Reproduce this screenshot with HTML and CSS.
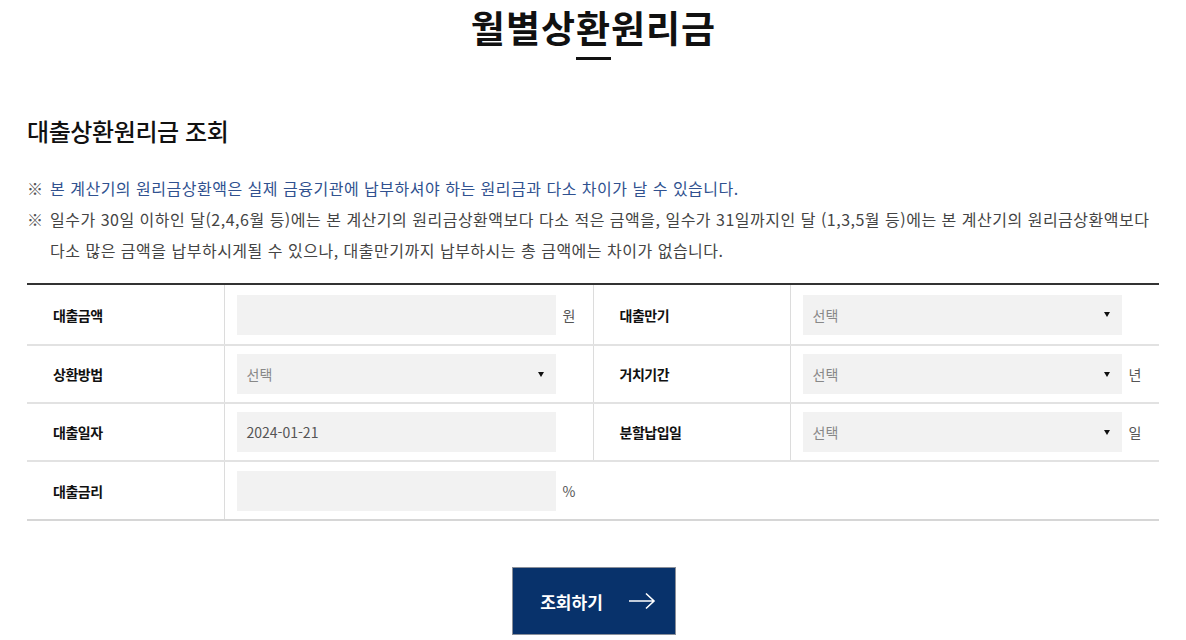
FILE: index.html
```html
<!DOCTYPE html>
<html lang="ko">
<head>
<meta charset="utf-8">
<title>월별상환원리금</title>
<link rel="stylesheet" href="styles.css">
</head>
<body>
<div class="page">
  <header class="page-head">
    <h1 class="page-title">월별상환원리금</h1>
    <span class="title-bar"></span>
  </header>

  <h2 class="section-title">대출상환원리금 조회</h2>

  <ul class="notes">
    <li class="note note-blue"><span class="mark">※</span><span>본 계산기의 원리금상환액은 실제 금융기관에 납부하셔야 하는 원리금과 다소 차이가 날 수 있습니다.</span></li>
    <li class="note"><span class="mark">※</span><span>일수가 30일 이하인 달(2,4,6월 등)에는 본 계산기의 원리금상환액보다 다소 적은 금액을, 일수가 31일까지인 달 (1,3,5월 등)에는 본 계산기의 원리금상환액보다 다소 많은 금액을 납부하시게될 수 있으나, 대출만기까지 납부하시는 총 금액에는 차이가 없습니다.</span></li>
  </ul>

  <table class="form-table">
    <colgroup>
      <col class="c-label"><col class="c-field"><col class="c-label"><col class="c-field">
    </colgroup>
    <tbody>
      <tr class="first-row">
        <th>대출금액</th>
        <td><div class="field"><div class="box"></div><span class="unit">원</span></div></td>
        <th>대출만기</th>
        <td><div class="field"><div class="box select"><span>선택</span><i class="caret"></i></div></div></td>
      </tr>
      <tr>
        <th>상환방법</th>
        <td><div class="field"><div class="box select"><span>선택</span><i class="caret"></i></div></div></td>
        <th>거치기간</th>
        <td><div class="field"><div class="box select"><span>선택</span><i class="caret"></i></div><span class="unit">년</span></div></td>
      </tr>
      <tr>
        <th>대출일자</th>
        <td><div class="field"><div class="box value"><span>2024-01-21</span></div></div></td>
        <th>분할납입일</th>
        <td><div class="field"><div class="box select"><span>선택</span><i class="caret"></i></div><span class="unit">일</span></div></td>
      </tr>
      <tr class="last-row">
        <th>대출금리</th>
        <td colspan="3"><div class="field"><div class="box"></div><span class="unit">%</span></div></td>
      </tr>
    </tbody>
  </table>

  <div class="actions">
    <button class="btn-search" type="button">
      <span>조회하기</span>
      <svg class="btn-arrow" width="28" height="18" viewBox="0 0 28 18" aria-hidden="true">
        <path d="M1 9 H26 M18 1.5 L26 9 L18 16.5" fill="none" stroke="#fff" stroke-width="1.6"/>
      </svg>
    </button>
  </div>
</div>
</body>
</html>
```

FILE: styles.css
```css
* { box-sizing: border-box; }

html, body {
  margin: 0;
  padding: 0;
  background: #fff;
}

body {
  font-family: "Noto Sans CJK KR", "Noto Sans", sans-serif;
  color: #222;
}

.page {
  width: 1132px;
  margin-left: 27px;
}

.page-head {
  display: flex;
  flex-direction: column;
  align-items: center;
  padding-left: 1px;
}

.page-title {
  margin: 0;
  font-size: 37px;
  font-weight: 700;
  line-height: 54px;
  color: #111;
  letter-spacing: 1px;
}

.title-bar {
  display: block;
  width: 35px;
  height: 3px;
  background: #111;
  margin-top: 3px;
}

.section-title {
  margin: 55px 0 0;
  font-size: 24px;
  font-weight: 500;
  line-height: 32px;
  letter-spacing: -0.4px;
  color: #111;
}

.notes {
  list-style: none;
  margin: 26px 0 0;
  padding: 0;
}

.note {
  display: flex;
  font-size: 16px;
  line-height: 31px;
  color: #444;
  letter-spacing: 0.5px;
}

.note-blue { color: #30518f; }

.note .mark {
  flex: 0 0 23px;
  color: #555;
  letter-spacing: 0;
}

.form-table {
  width: 1132px;
  margin-top: 17px;
  border-collapse: collapse;
  table-layout: fixed;
  border-top: 2px solid #333;
  border-bottom: 2px solid #d6d6d6;
}

.c-label { width: 197px; }
.c-field { width: 369px; }

.form-table th,
.form-table td {
  height: 58px;
  padding: 0;
  border-bottom: 2px solid #e2e2e2;
  border-left: 1px solid #dcdcdc;
  vertical-align: middle;
}

.form-table .first-row th,
.form-table .first-row td { height: 61px; }

.form-table .last-row th,
.form-table .last-row td { height: 59px; border-bottom: 0; }

.form-table th:first-child { border-left: 0; }

.form-table th {
  text-align: left;
  padding-left: 26px;
  font-size: 14px;
  font-weight: 700;
  color: #111;
  letter-spacing: -0.5px;
}

.field {
  display: flex;
  align-items: center;
  padding-left: 12px;
  gap: 7px;
}

.box {
  width: 319px;
  height: 40px;
  background: #f2f2f2;
  display: flex;
  align-items: center;
  padding: 0 10px;
  font-size: 14px;
  color: #888;
}

.box.value { color: #555; }

.box.select { justify-content: space-between; padding-right: 12px; }

.caret {
  width: 0;
  height: 0;
  border-left: 3px solid transparent;
  border-right: 3px solid transparent;
  border-top: 5px solid #111;
}

.unit {
  font-size: 14px;
  color: #555;
}

.actions {
  display: flex;
  justify-content: center;
  margin-top: 46px;
  padding-left: 2px;
}

.btn-search {
  width: 164px;
  height: 68px;
  background: #08326b;
  border: 1px solid #8a8f99;
  color: #fff;
  font-family: inherit;
  font-size: 17px;
  font-weight: 700;
  display: flex;
  align-items: center;
  justify-content: center;
  gap: 25px;
  padding: 0 0 0 8px;
  letter-spacing: 0;
}

.btn-arrow { display: block; }
```
